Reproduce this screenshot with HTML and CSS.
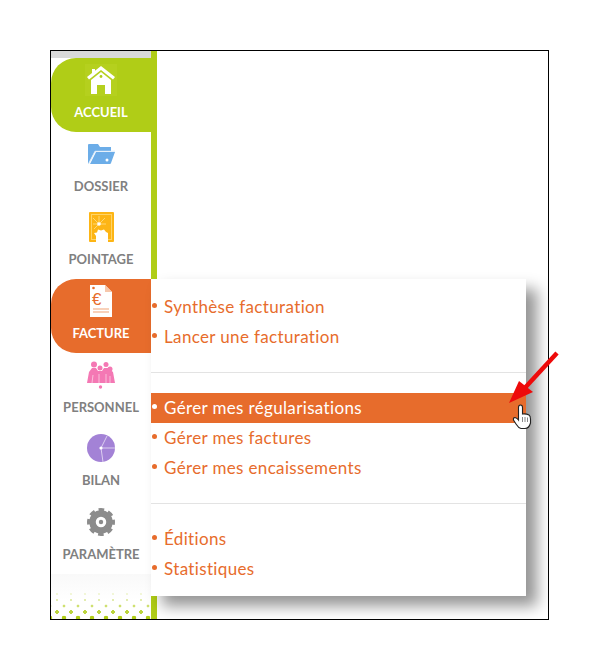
FILE: index.html
```html
<!DOCTYPE html>
<html lang="fr">
<head>
<meta charset="utf-8">
<title>Facture</title>
<link rel="stylesheet" href="styles.css">
</head>
<body>
<div class="page">
  <div class="frame">
    <aside class="sidebar">
      <div class="sidebar-top"></div>
      <nav class="nav">
        <a class="nav-item nav-accueil">
          <span class="nav-icon">
            <svg width="32" height="32" viewBox="0 0 32 32"><rect width="32" height="32" fill="#b5d01e"/><path d="M16 2 L30 13 L28 15.5 L16 6 L4 15.5 L2 13 L7 9 V5 H10 V6.8 Z" fill="#fff"/><path d="M16 8 L26 16 V30 H20 V21 H12 V30 H6 V16 Z" fill="#fff"/><circle cx="16" cy="12.5" r="1.4" fill="#b0cd17"/></svg>
          </span>
          <span class="nav-label">ACCUEIL</span>
        </a>
        <a class="nav-item">
          <span class="nav-icon">
            <svg width="29" height="22" viewBox="0 0 29 22"><path d="M1 21 V2 Q1 1 2 1 H11 L13 4 H24 V8 H8 L1 21 Z" fill="#6cade8"/><path d="M3 21 L9 9 H28 L24 20 Q23.7 21 23 21 Z" fill="#6cade8"/><path d="M1.5 21 L8 8.2 H28" fill="none" stroke="#cfe4f7" stroke-width="0.8"/><circle cx="20" cy="17" r="1.5" fill="#fff"/></svg>
          </span>
          <span class="nav-label">DOSSIER</span>
        </a>
        <a class="nav-item">
          <span class="nav-icon">
            <svg width="25" height="30" viewBox="0 0 25 30"><rect width="25" height="30" rx="1" fill="#fdb515"/><rect x="2.5" y="2.500" width="20" height="25" fill="none" stroke="#ffd467" stroke-width="1"/><path d="M10 12 L4 6 M10 12 L16 6 M10 12 L10 4 M10 12 L4 12 M10 12 L17 12 M10 12 L5 17" stroke="#ffe08c" stroke-width="0.8"/><circle cx="10" cy="12" r="1.800" fill="#fff"/><path d="M7 30 V24 L5 21 L8 20.500 L9 17.500 L12 18.500 L15 17.500 L17 20 L19 21 V30 Z" fill="#fff"/></svg>
          </span>
          <span class="nav-label">POINTAGE</span>
        </a>
        <a class="nav-item nav-facture">
          <span class="nav-icon">
            <svg width="24" height="32" viewBox="0 0 24 32"><path d="M1 0 H16 L23 7 V32 H1 Z" fill="#fff"/><path d="M16 0 V7 H23 Z" fill="#f6c7ac"/><circle cx="4.500" cy="3" r="1.300" fill="#e76c2c"/><text x="3" y="20" class="euro">€</text><path d="M4 24 H20 M4 27 H20" stroke="#f2a377" stroke-width="1.200"/></svg>
          </span>
          <span class="nav-label">FACTURE</span>
        </a>
        <a class="nav-item">
          <span class="nav-icon">
            <svg width="30" height="28" viewBox="0 0 30 28"><g fill="#f478b4"><circle cx="8" cy="3.500" r="3"/><circle cx="20" cy="3.500" r="2.500"/><circle cx="14" cy="7" r="2.500"/><circle cx="24" cy="8" r="2.500"/><path d="M1 22 L3 11 L6 7 H10 L12 10 H16 L18 7 H22 L27 11 L29 22 Z"/><circle cx="14.500" cy="26" r="1.700"/></g><path d="M6 22 L7 14 M13 22 V13 M20 22 V13 M24 22 V15" stroke="#fbd0e4" stroke-width="0.8"/></svg>
          </span>
          <span class="nav-label">PERSONNEL</span>
        </a>
        <a class="nav-item">
          <span class="nav-icon">
            <svg width="28" height="28" viewBox="0 0 28 28"><circle cx="14" cy="14" r="14" fill="#a382d6"/><path d="M14 14 L20 2 M14 14 H28 M14 14 L16 28" stroke="#e2d7f3" stroke-width="0.9"/><circle cx="14" cy="14" r="1.600" fill="#fff"/></svg>
          </span>
          <span class="nav-label">BILAN</span>
        </a>
        <a class="nav-item">
          <span class="nav-icon">
            <svg width="28" height="28" viewBox="0 0 28 28"><circle cx="14" cy="14" r="8.500" fill="none" stroke="#8c8c8c" stroke-width="6.500"/><circle cx="14" cy="14" r="12" fill="none" stroke="#8c8c8c" stroke-width="4" stroke-dasharray="5.420 4.005" stroke-dashoffset="2.710"/><circle cx="14" cy="14" r="2.200" fill="#8c8c8c"/></svg>
          </span>
          <span class="nav-label">PARAMÈTRE</span>
        </a>
      </nav>
      <div class="sidebar-foot"></div>
    </aside>
    <div class="stripe"></div>
    <main class="content"></main>
    <div class="menu">
      <ul class="menu-group">
        <li class="menu-row"><span>Synthèse facturation</span></li>
        <li class="menu-row"><span>Lancer une facturation</span></li>
      </ul>
      <ul class="menu-group">
        <li class="menu-row menu-row-active"><span>Gérer mes régularisations</span></li>
        <li class="menu-row"><span>Gérer mes factures</span></li>
        <li class="menu-row"><span>Gérer mes encaissements</span></li>
      </ul>
      <ul class="menu-group">
        <li class="menu-row"><span>Éditions</span></li>
        <li class="menu-row"><span>Statistiques</span></li>
      </ul>
    </div>
  </div>
  <svg class="annotation" width="599" height="670" viewBox="0 0 599 670">
    <path d="M557 353 L522 391" stroke="#ee0a0a" stroke-width="4.500" fill="none"/>
    <path d="M509 403 L519 381 L533 392 Z" fill="#ee0a0a"/>
    <path d="M518.500 420 V407.500 Q518.500 405 520.500 405 Q522.500 405 522.500 407.500 V414 Q526 413.500 529 415 Q530.500 416 530.500 419 V423 Q529 428.500 525 428.500 H521 Q518.500 428 516 424 L513.500 420 Q513 417.500 515 417.500 Q517 418 518.500 420 Z" fill="#fff" stroke="#222" stroke-width="1.100"/>
    <path d="M522.500 417 V422 M525 417 V422 M527.500 417.500 V422" stroke="#555" stroke-width="0.700"/>
  </svg>
</div>
</body>
</html>
```

FILE: styles.css
```css
* {
  box-sizing: border-box;
}

html,
body {
  margin: 0;
  padding: 0;
  background: #fff;
}

.page {
  position: relative;
  width: 599px;
  height: 670px;
  padding: 50px;
  overflow: hidden;
}

.frame {
  position: relative;
  display: flex;
  width: 499px;
  height: 570px;
  border: 1px solid #000;
  background: #fff;
  overflow: hidden;
  font-family: Lato, "Liberation Sans", sans-serif;
}

.sidebar {
  display: flex;
  flex-direction: column;
  width: 100px;
  flex: none;
  background: #fff;
}

.sidebar-top {
  height: 7px;
  background: #d9d9d9;
}

.nav {
  display: flex;
  flex-direction: column;
}

.nav-item {
  display: flex;
  flex-direction: column;
  align-items: center;
  height: 73.7px;
  color: #808080;
  border-radius: 25px 0 0 25px;
}

.nav-accueil {
  background: #b0cd17;
  color: #fff;
}

.nav-facture {
  background: #e76c2c;
  color: #fff;
}

.nav-icon {
  display: flex;
  align-items: center;
  justify-content: center;
  height: 44px;
}

.nav-icon svg {
  display: block;
}

.nav-label {
  font-size: 13px;
  line-height: 20px;
  font-weight: 700;
  white-space: nowrap;
}

.euro {
  font-family: "Liberation Sans", sans-serif;
  font-size: 17px;
  fill: #e76c2c;
}

.sidebar-foot {
  flex: 1;
  background:
    radial-gradient(circle, #b0cd17 2px, transparent 2.6px) 6px 41px / 14px 6px repeat-x,
    radial-gradient(circle, #bcd53d 1.6px, transparent 2.1px) -1px 35px / 14px 6px repeat-x,
    radial-gradient(circle, #cfe070 1.1px, transparent 1.7px) 6px 29px / 14px 6px repeat-x,
    radial-gradient(circle, #e2ecb0 0.8px, transparent 1.3px) -1px 23px / 14px 6px repeat-x,
    radial-gradient(circle, #edf3cc 0.6px, transparent 1.1px) 13px 17px / 14px 6px repeat-x,
    linear-gradient(#f9f9f9, #fff 60%);
  background-color: #fff;
}

.stripe {
  width: 6px;
  flex: none;
  background: #b0cd17;
}

.content {
  flex: 1;
}

.menu {
  position: absolute;
  top: 228px;
  left: 100px;
  width: 375px;
  height: 317px;
  padding: 13px 0 0;
  background: #fff;
  box-shadow: 11px 10px 14px rgba(0, 0, 0, 0.42);
  color: #e76c2c;
  font-size: 17px;
  letter-spacing: 0.35px;
}

.menu-group {
  list-style: none;
  margin: 0 0 20px;
  padding: 0 0 20px;
  border-bottom: 1px solid #e3e3e3;
}

.menu-group:last-child {
  margin: 0;
  padding: 0;
  border-bottom: 0;
}

.menu-row {
  display: flex;
  align-items: center;
  gap: 7px;
  height: 30px;
  padding-left: 1px;
  white-space: nowrap;
}

.menu-row span {
  padding-bottom: 2px;
}

.menu-row::before {
  content: "";
  width: 5px;
  height: 5px;
  margin-top: -3px;
  border-radius: 50%;
  background: currentColor;
  flex: none;
}

.menu-row-active {
  background: #e76c2c;
  color: #fff;
}

.annotation {
  position: absolute;
  top: 0;
  left: 0;
  pointer-events: none;
}
```
